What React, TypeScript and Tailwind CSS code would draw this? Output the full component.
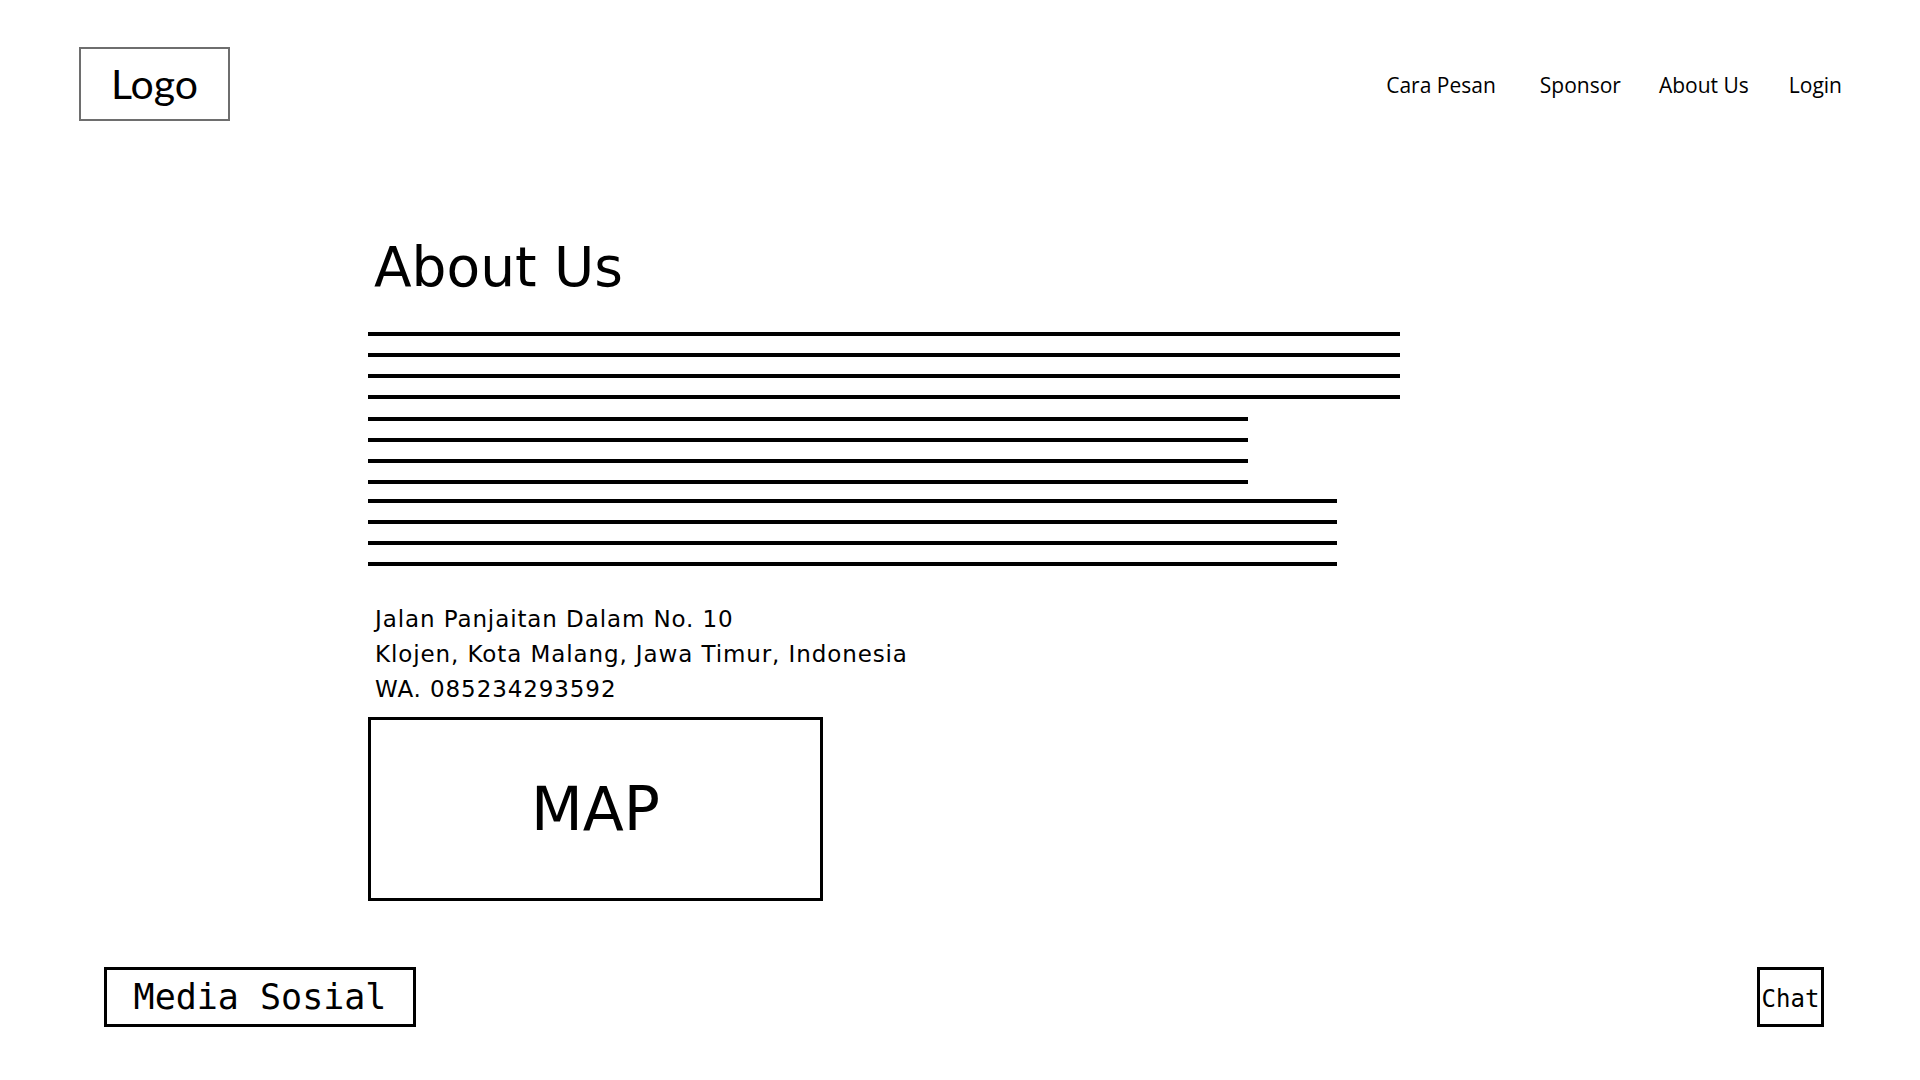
import React from 'react';

const navItems = [
  { label: 'Cara Pesan', cls: '' },
  { label: 'Sponsor', cls: 'ml-[44px]' },
  { label: 'About Us', cls: 'ml-[38px]' },
  { label: 'Login', cls: 'ml-[40px]' },
];

// the placeholder "paragraph": three groups of four rules with different lengths
const lineGroups = [
  { width: 'w-[1032px]', cls: '' },
  { width: 'w-[880px]', cls: 'mt-[18px]' },
  { width: 'w-[969px]', cls: 'mt-[15px]' },
];

const Rule: React.FC<{ width: string }> = ({ width }) => <div className={`${width} h-[4px] bg-black`} />;

export default function App() {
  return (
    <div className="w-[1920px] h-[1080px] bg-white text-black flex flex-col overflow-hidden">
      {/* header */}
      <header className="flex items-center justify-between pt-[47px] pl-[79px] pr-[78px]">
        <div className="w-[151px] h-[74px] border-2 border-[#6e6e6e] flex items-center justify-center">
          <span className="text-[41px] leading-none font-['Lato',sans-serif] pb-[1px]">Logo</span>
        </div>
        <nav className="flex items-center font-['Open_Sans',sans-serif] text-[21px] leading-none pt-[2px]">
          {navItems.map((item) => (
            <a key={item.label} className={`${item.cls} cursor-pointer`}>
              {item.label}
            </a>
          ))}
        </nav>
      </header>

      {/* about section */}
      <main className="flex flex-col ml-[368px] mt-[119px] font-['DejaVu_Sans',sans-serif]">
        <h1 className="text-[55px] leading-none font-normal pl-[6px]">About Us</h1>

        <div className="mt-[37px] flex flex-col">
          {lineGroups.map((g, i) => (
            <div key={i} className={`flex flex-col gap-[17px] ${g.cls}`}>
              <Rule width={g.width} />
              <Rule width={g.width} />
              <Rule width={g.width} />
              <Rule width={g.width} />
            </div>
          ))}
        </div>

        <div className="mt-[36px] pl-[7px] text-[23px] leading-[35px] tracking-[0.9px]">
          <p>Jalan Panjaitan Dalam No. 10</p>
          <p>Klojen, Kota Malang, Jawa Timur, Indonesia</p>
          <p>WA. 085234293592</p>
        </div>

        <div className="mt-[10px] w-[455px] h-[184px] border-[3px] border-black flex items-center justify-center">
          <span className="text-[60px] leading-none">MAP</span>
        </div>
      </main>

      {/* footer */}
      <footer className="mt-[66px] flex items-start justify-between pl-[104px] pr-[96px] font-['DejaVu_Sans_Mono',monospace]">
        <div className="w-[312px] h-[60px] border-[3px] border-black flex items-center justify-center">
          <span className="text-[35px] leading-none">Media Sosial</span>
        </div>
        <div className="w-[67px] h-[60px] border-[3px] border-black flex items-center justify-center">
          <span className="text-[24px] leading-none pt-[3px]">Chat</span>
        </div>
      </footer>
    </div>
  );
}
